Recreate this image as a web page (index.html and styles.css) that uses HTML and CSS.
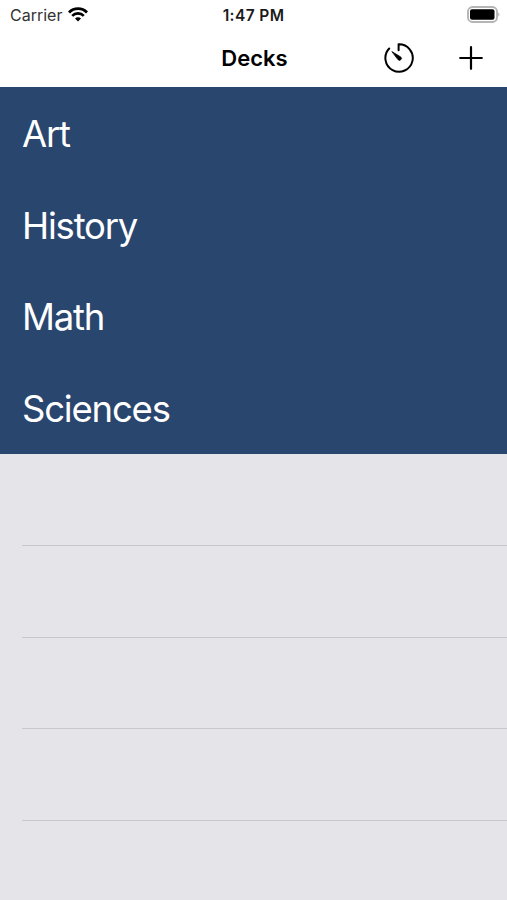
FILE: index.html
```html
<!DOCTYPE html>
<html lang="en">
<head>
  <meta charset="UTF-8" />
  <meta name="viewport" content="width=device-width, initial-scale=1" />
  <title>Decks</title>
  <link rel="stylesheet" href="styles.css">
</head>
<body>

<header>
  <div class="status-bar">
    <div class="carrier">
      <span class="carrier-name">Carrier</span>
      <svg class="wifi" viewBox="0 0 20 15" width="20" height="15">
        <path d="M1 5.4a12.6 12.6 0 0 1 18 0" fill="none" stroke="#000" stroke-width="2.8" />
        <path d="M4.2 8.9a8 8 0 0 1 11.6 0" fill="none" stroke="#000" stroke-width="2.6" />
        <path d="M10 14.6l-3-3a4.2 4.2 0 0 1 6 0z" />
      </svg>
    </div>
    <span class="time">1:47 PM</span>
    <svg class="battery" viewBox="0 0 33 17" width="33" height="17">
      <rect x="1" y="1" width="29" height="15" rx="4.5" fill="none" stroke="#b5b5b5" stroke-width="1.9" />
      <rect x="3" y="3.2" width="24.5" height="10.6" rx="2" />
      <path d="M31.3 6.5c1.5.8 1.5 3.2 0 4z" fill="#aaa" />
    </svg>
  </div>
  <nav class="nav-bar">
    <h1>Decks</h1>
    <div class="nav-actions">
      <button type="button" aria-label="Timer">
        <svg viewBox="0 0 32 32" width="32" height="32" fill="none" stroke="#000" stroke-width="2" stroke-linecap="round">
          <path d="M15.600 8.300V2.300a13.700 13.700 0 1 1-9.400 4.200" stroke-linejoin="round" />
          <path d="M9.200 9.800l8.600 5.200a1.900 1.900 0 0 1-2.700 2.700z" fill="#000" stroke-width="0.800" stroke-linejoin="round" />
        </svg>
      </button>
      <button type="button" aria-label="Add deck">
        <svg viewBox="0 0 24 24" width="24" height="24" stroke="#000" stroke-width="2.2" stroke-linecap="round">
          <path d="M12 1.2v21.600M1.200 12h21.600" />
        </svg>
      </button>
    </div>
  </nav>
</header>

<ul class="decks">
  <li class="deck">Art</li>
  <li class="deck">History</li>
  <li class="deck">Math</li>
  <li class="deck">Sciences</li>
</ul>

<div class="empty-rows">
  <div class="row"></div>
  <div class="row"></div>
  <div class="row"></div>
  <div class="row"></div>
</div>

</body>
</html>
```

FILE: styles.css
```css
body {
  font-family: Inter, sans-serif;
  margin: 0;
  min-height: 100vh;
  background-color: #e5e4e9;
  color: #000;
}
header {
  height: 87px;
  background-color: #fff;
}
.status-bar {
  display: grid;
  grid-template-columns: 1fr auto 1fr;
  align-items: center;
  height: 28px;
  padding: 0 7px 0 10px;
}
.carrier {
  display: flex;
  align-items: center;
  gap: 6px;
  font-size: 16px;
  color: #333;
}
.carrier-name, .time {
  padding-top: 2px;
}
.time {
  margin-right: 3px;
  font-size: 15.5px;
  font-weight: 600;
  letter-spacing: 0.4px;
  color: #1a1a1a;
}
.battery {
  justify-self: end;
}
.nav-bar {
  display: grid;
  grid-template-columns: 1fr auto 1fr;
  align-items: center;
  height: 60px;
  padding: 0 24px;
}
h1 {
  grid-column: 2;
  margin: 0 -1px 0 1px;
  font-size: 22px;
  font-weight: 600;
}
.nav-actions {
  display: flex;
  align-items: center;
  justify-content: flex-end;
  gap: 44px;
}
button {
  display: flex;
  padding: 0;
  border: none;
  background: none;
}
.decks {
  margin: 0;
  padding: 0;
  list-style: none;
  background-color: #29466f;
}
.deck {
  display: flex;
  align-items: center;
  box-sizing: border-box;
  height: 91.75px;
  padding: 2px 22px 0;
  font-size: 36.5px;
  letter-spacing: -1.2px;
  color: #fff;
}
.row {
  box-sizing: border-box;
  height: 91.75px;
  margin-left: 22px;
  border-bottom: 1px solid #c8c7cc;
}
```
